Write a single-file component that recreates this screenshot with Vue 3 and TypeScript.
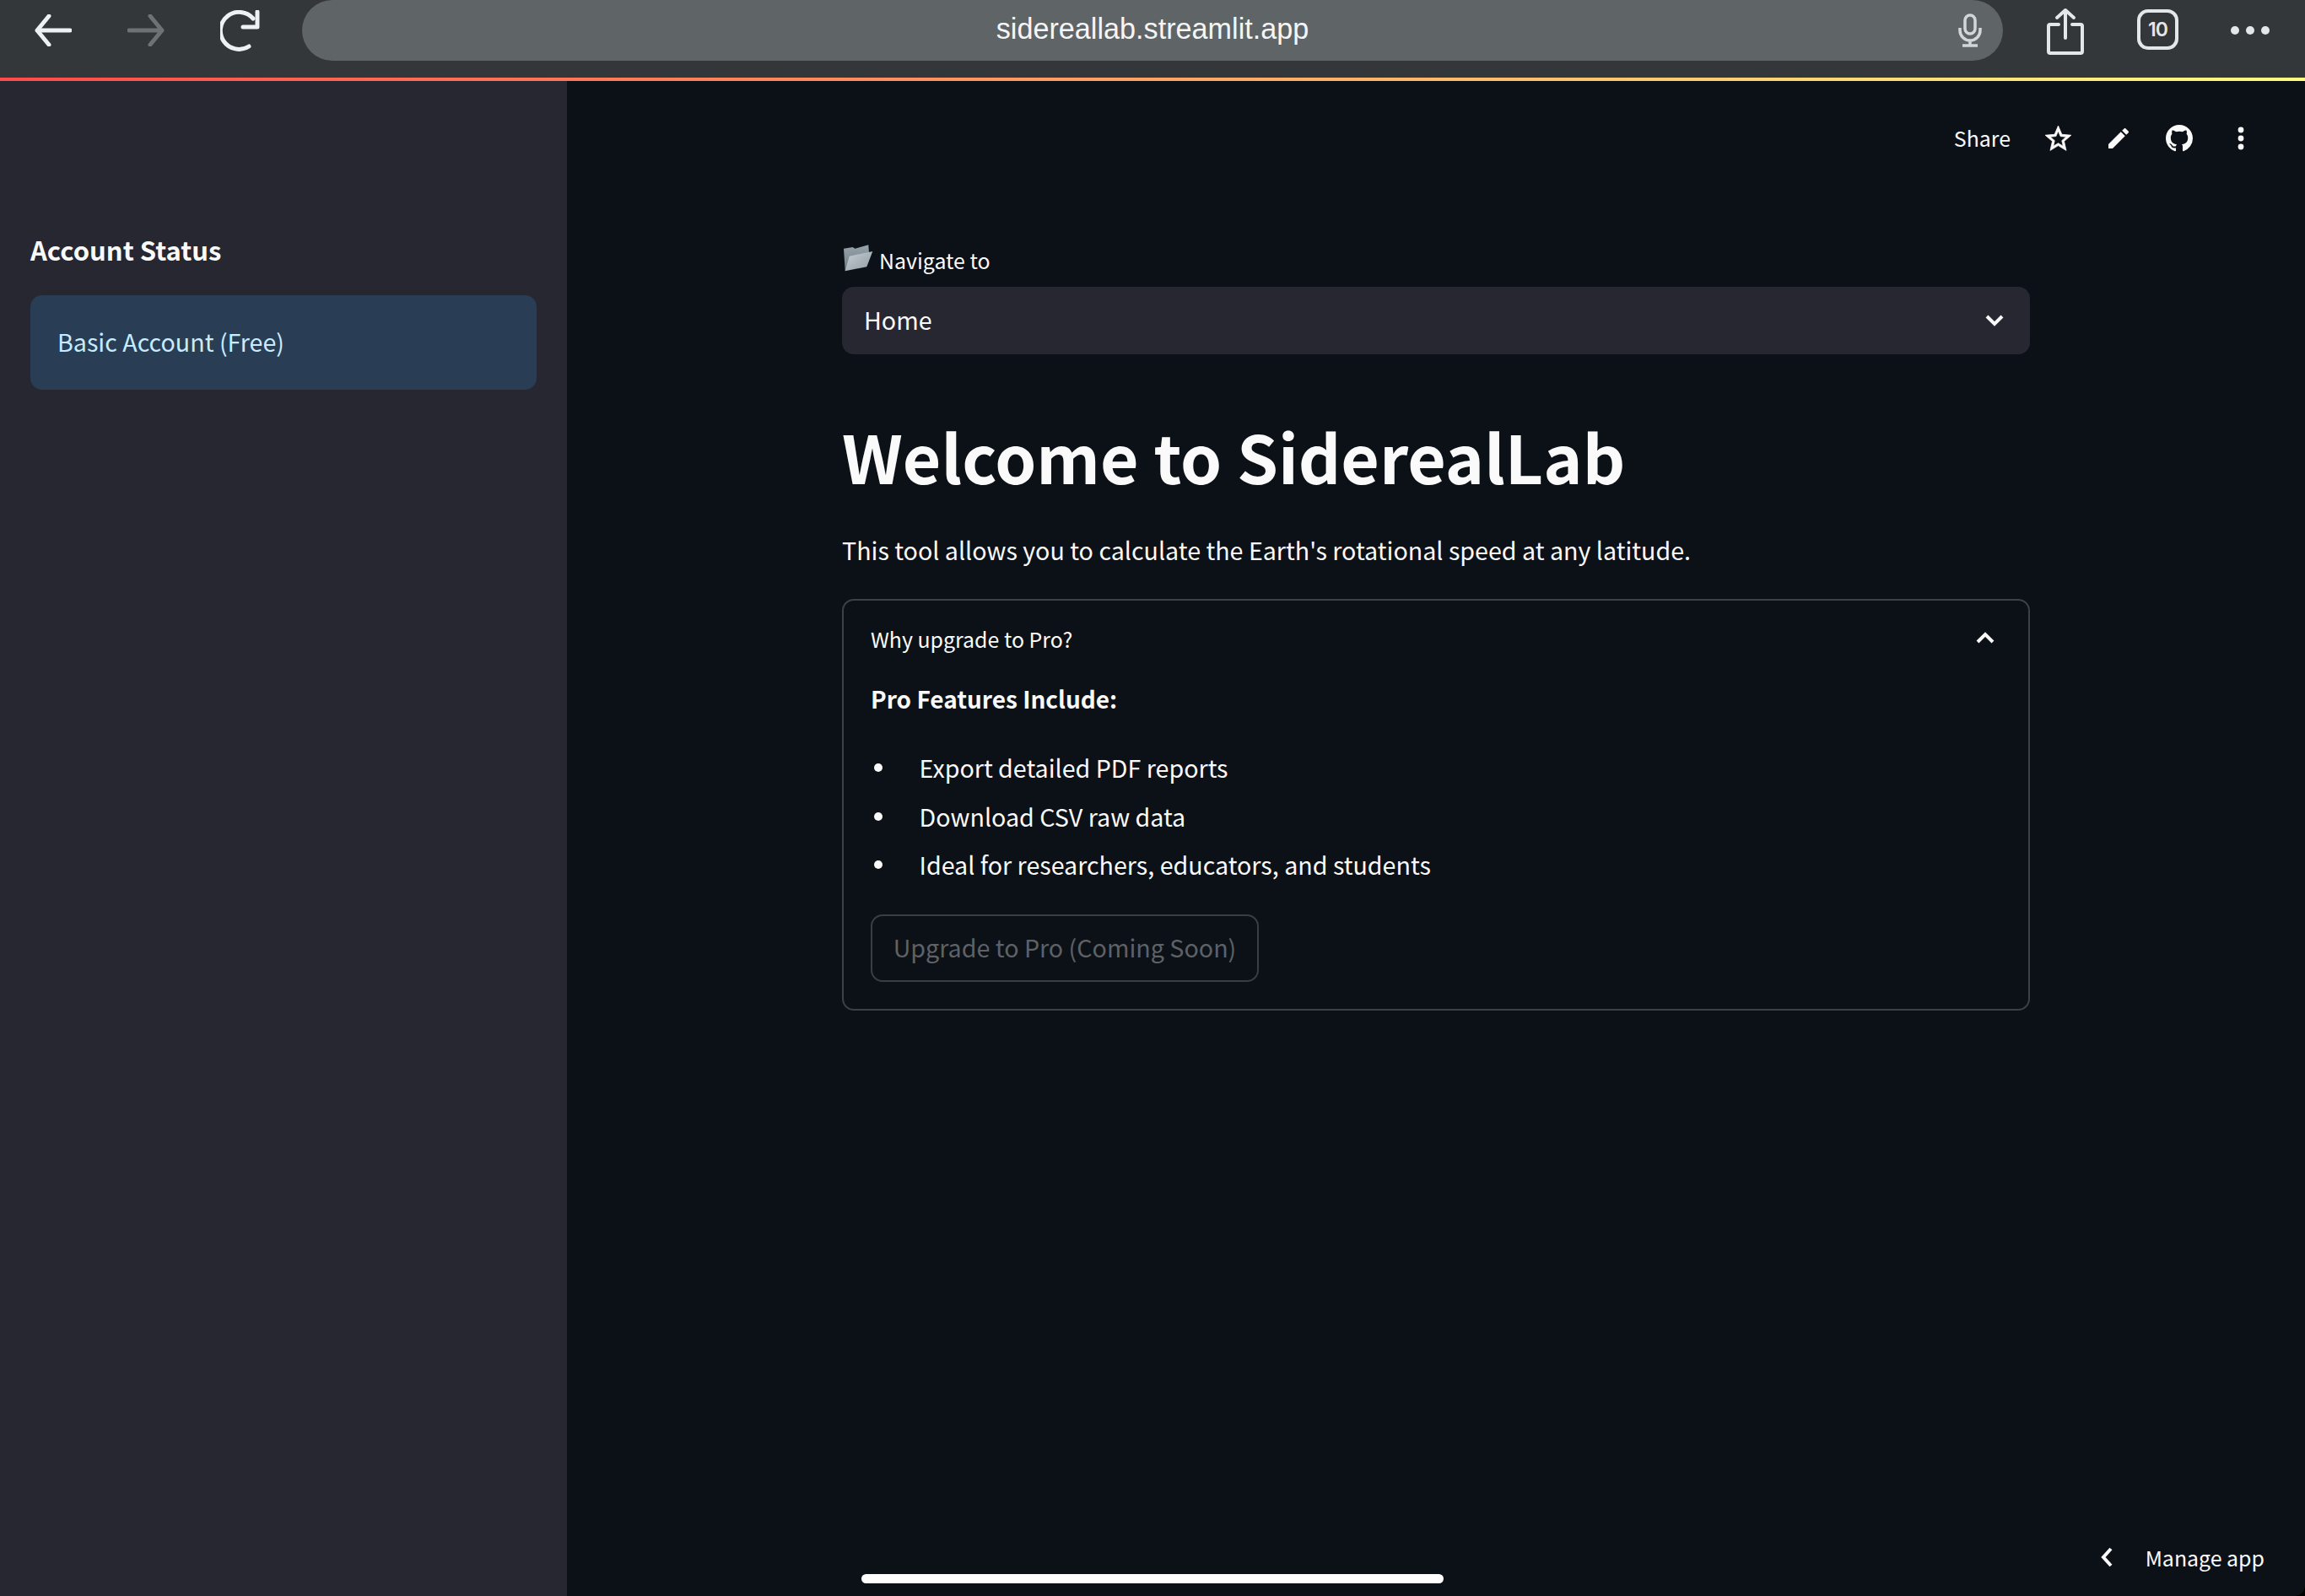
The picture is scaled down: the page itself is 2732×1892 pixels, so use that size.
<script setup lang="ts">
const features: string[] = [
  'Export detailed PDF reports',
  'Download CSV raw data',
  'Ideal for researchers, educators, and students',
]
</script>

<template>
  <div class="page">
    <header class="browser">
      <div class="nav">
        <svg class="nav-icon" width="44" height="38" viewBox="0 0 44 38"><path d="M42 19H3M17 2 3 19l14 17" /></svg>
        <svg class="nav-icon off" width="44" height="38" viewBox="0 0 44 38"><path d="M2 19h39M27 2l14 17-14 17" /></svg>
        <svg class="nav-icon reload" width="48" height="50" viewBox="0 0 48 50"><path d="M39 10A22 22 0 1 0 34 43" /><path d="M44 2v18H27" /></svg>
      </div>
      <div class="url">
        <span class="url-text">sidereallab.streamlit.app</span>
        <svg class="mic" width="28" height="40" viewBox="0 0 28 40"><rect x="8" y="2" width="12" height="22" rx="6" /><path d="M2 17v3a12 12 0 0 0 24 0v-3M14 32v6M5 38h18" /></svg>
      </div>
      <div class="tools">
        <svg class="tool-share" width="44" height="56" viewBox="0 0 44 56"><path d="M14 20H4a2 2 0 0 0-2 2v30a2 2 0 0 0 2 2h36a2 2 0 0 0 2-2V22a2 2 0 0 0-2-2H30M22 36V3M12 12 22 3l10 9" /></svg>
        <div class="tabs">10</div>
        <svg class="more" width="46" height="12" viewBox="0 0 46 12"><circle cx="5" cy="6" r="5" /><circle cx="23" cy="6" r="5" /><circle cx="41" cy="6" r="5" /></svg>
      </div>
    </header>
    <div class="deco"></div>

    <div class="app">
      <aside class="sidebar">
        <h2 class="side-title">Account Status</h2>
        <div class="alert">Basic Account (Free)</div>
      </aside>

      <main class="main">
        <div class="topbar">
          <span class="share">Share</span>
          <svg class="top-star" width="37" height="37" viewBox="0 0 24 24"><path d="M22 9.24l-7.19-.62L12 2 9.19 8.63 2 9.24l5.46 4.73L5.82 21 12 17.27 18.18 21l-1.63-7.03L22 9.24zM12 15.4l-3.76 2.27 1-4.28-3.32-2.88 4.38-.38L12 6.1l1.71 4.04 4.38.38-3.32 2.88 1 4.28L12 15.4z" /></svg>
          <svg class="top-edit" width="32" height="32" viewBox="0 0 24 24"><path d="M3 17.25V21h3.75L17.81 9.94l-3.75-3.75L3 17.25zM20.71 7.04c.39-.39.39-1.02 0-1.41l-2.34-2.34c-.39-.39-1.02-.39-1.41 0l-1.83 1.83 3.75 3.75 1.83-1.83z" /></svg>
          <svg class="top-gh" width="32" height="32" viewBox="0 0 16 16"><path d="M8 0C3.58 0 0 3.58 0 8c0 3.54 2.29 6.53 5.47 7.59.4.07.55-.17.55-.38 0-.19-.01-.82-.01-1.49-2.01.37-2.53-.49-2.69-.94-.09-.23-.48-.94-.82-1.13-.28-.15-.68-.52-.01-.53.63-.01 1.08.58 1.23.82.72 1.21 1.87.87 2.33.66.07-.52.28-.87.51-1.07-1.78-.2-3.64-.89-3.64-3.95 0-.87.31-1.59.82-2.15-.08-.2-.36-1.02.08-2.12 0 0 .67-.21 2.2.82.64-.18 1.32-.27 2-.27.68 0 1.36.09 2 .27 1.53-1.04 2.2-.82 2.2-.82.44 1.1.16 1.92.08 2.12.51.56.82 1.27.82 2.15 0 3.07-1.87 3.75-3.65 3.95.29.25.54.73.54 1.48 0 1.07-.01 1.93-.01 2.2 0 .21.15.46.55.38A8.013 8.013 0 0016 8c0-4.42-3.58-8-8-8z" /></svg>
          <svg class="top-dots" width="10" height="28" viewBox="0 0 10 28"><circle cx="5" cy="4" r="3.4" /><circle cx="5" cy="14" r="3.4" /><circle cx="5" cy="24" r="3.4" /></svg>
        </div>

        <div class="content">
          <label class="nav-label">
            <svg class="folder" width="36" height="34" viewBox="0 0 36 34">
              <defs>
                <linearGradient id="fback" x1="0" y1="0" x2="0" y2="1"><stop offset="0" stop-color="#98a4ab" /><stop offset="1" stop-color="#6d7a82" /></linearGradient>
                <linearGradient id="ffront" x1="0" y1="0" x2="1" y2="1"><stop offset="0" stop-color="#c6cfd4" /><stop offset="1" stop-color="#8f9ba3" /></linearGradient>
              </defs>
              <path d="M0 5.7 10.7 4l2.6 1.7 16-4.4.7 9.4L1.7 32.3z" fill="url(#fback)" />
              <path d="M6.7 14.7 34.3 9l-7 18.3-25.6 5z" fill="url(#ffront)" />
            </svg>
            <span>Navigate to</span>
          </label>
          <div class="select">
            <span class="lift">Home</span>
            <svg class="chev" width="22" height="14" viewBox="0 0 22 14"><path d="M2 2l9 9 9-9" /></svg>
          </div>

          <h1 class="title">Welcome to SiderealLab</h1>
          <p class="intro">This tool allows you to calculate the Earth's rotational speed at any latitude.</p>

          <section class="expander">
            <div class="exp-head">
              <span>Why upgrade to Pro?</span>
              <svg class="chev" width="22" height="14" viewBox="0 0 22 14"><path d="M2 12l9-9 9 9" /></svg>
            </div>
            <p class="pro">Pro Features Include:</p>
            <ul class="list">
              <li v-for="item in features" :key="item">{{ item }}</li>
            </ul>
            <button class="upgrade" disabled>Upgrade to Pro (Coming Soon)</button>
          </section>
        </div>
      </main>
    </div>

    <div class="manage">
      <svg class="chev" width="16" height="26" viewBox="0 0 16 26"><path d="M13 3 4 13l9 10" /></svg>
      <span>Manage app</span>
    </div>
    <div class="home-bar"></div>
    <div class="corner"></div>
  </div>
</template>

<style>
html, body { margin: 0; background: #0c1117; }
</style>

<style scoped>
.page {
  position: relative;
  width: 2732px;
  height: 1892px;
  overflow: hidden;
  display: flex;
  flex-direction: column;
  background: #0c1117;
  color: #fafafa;
  font-family: "Noto Sans CJK SC", "Noto Sans", sans-serif;
}
.browser {
  height: 92px;
  flex: none;
  display: flex;
  background: #33373a;
}
.nav { width: 358px; flex: none; display: flex; align-items: flex-start; }
.nav-icon { fill: none; stroke: #eef1f3; stroke-width: 5px; stroke-linecap: round; stroke-linejoin: round; margin-top: 17px; }
.nav-icon:first-child { margin-left: 41px; }
.nav-icon.off { stroke: #6f7275; margin-left: 66px; }
.nav-icon.reload { margin-left: 66px; margin-top: 12px; }
.url {
  width: 2016px;
  height: 72px;
  flex: none;
  position: relative;
  display: flex;
  align-items: center;
  justify-content: center;
  border-radius: 36px;
  background: #5f6467;
}
.url-text { font-family: "Liberation Sans", Arial, sans-serif; font-size: 34.2px; color: #f4f5f6; margin-bottom: 3px; }
.mic { position: absolute; right: 25px; top: 16px; fill: none; stroke: #d3d6d8; stroke-width: 3.5px; }
.tools { flex: 1; display: flex; align-items: flex-start; }
.tool-share { margin: 9px 0 0 52px; fill: none; stroke: #e4e7e9; stroke-width: 4px; stroke-linecap: round; stroke-linejoin: round; }
.tabs {
  margin: 11px 0 0 63px;
  width: 49px;
  height: 48px;
  box-sizing: border-box;
  border: 4.5px solid #e4e7e9;
  border-radius: 13px;
  display: flex;
  align-items: center;
  justify-content: center;
  font-family: Inter, sans-serif;
  font-size: 23px;
  font-weight: 600;
  letter-spacing: -1px;
  color: #e4e7e9;
}
.more { margin: 30px 0 0 62px; fill: #e4e7e9; }
.deco {
  height: 4px;
  flex: none;
  background: linear-gradient(90deg, #ff4b4b, #fffd80);
}
.app { flex: 1; min-height: 0; display: flex; }
.sidebar {
  width: 672px;
  flex: none;
  box-sizing: border-box;
  padding: 175px 36px 0;
  background: #262730;
}
.side-title { margin: 0 0 29px; font-size: 31px; line-height: 50px; font-weight: 600; }
.alert {
  height: 112px;
  box-sizing: border-box;
  display: flex;
  align-items: center;
  padding: 0 32px 4px;
  border-radius: 14px;
  background: #293e55;
  color: #c7ebff;
  font-size: 28.65px;
}
.main { flex: 1; min-width: 0; }
.topbar {
  height: 136px;
  box-sizing: border-box;
  padding-right: 71px;
  display: flex;
  align-items: center;
  justify-content: flex-end;
  fill: #fafafa;
  font-size: 24.9px;
}
.share { margin-right: 38px; margin-bottom: 2px; }
.top-star { margin-right: 37px; stroke: #fafafa; stroke-width: 0.5px; }
.top-edit { margin-right: 40px; }
.top-gh { margin-right: 52px; }
.content { padding: 0 326px; }
.nav-label { display: flex; align-items: center; height: 44px; margin-top: 52px; font-size: 24.9px; }
.nav-label span { margin-top: 3px; }
.folder { margin: 0 6px 0 2px; }
.select {
  margin-top: 12px;
  height: 80px;
  padding: 0 26px;
  display: flex;
  align-items: center;
  justify-content: space-between;
  border-radius: 14px;
  background: #262730;
  font-size: 28.65px;
}
.select .chev { margin-right: 5px; }
.lift { margin-bottom: 3px; }
.chev { fill: none; stroke: #fafafa; stroke-width: 4px; }
.title { margin: 68px 0 0; font-size: 78.5px; line-height: 105px; font-weight: 700; }
.intro { margin: 37px 0 0; font-size: 28.65px; line-height: 44px; }
.expander {
  margin-top: 36px;
  height: 488px;
  box-sizing: border-box;
  padding: 0 32px;
  border: 2px solid #3d4046;
  border-radius: 14px;
}
.exp-head {
  display: flex;
  align-items: center;
  justify-content: space-between;
  box-sizing: border-box;
  height: 94px;
  padding: 0 8px 5px 0;
  font-size: 24.9px;
}
.exp-head .chev { margin-bottom: 2px; }
.pro { margin: 0; font-size: 28px; line-height: 44px; font-weight: 600; }
.list { margin: 38px 0 0; padding: 0; list-style: none; font-size: 28.65px; line-height: 44px; }
.list li { display: flex; align-items: center; margin-bottom: 13.5px; padding-left: 4px; }
.list li::before {
  content: "";
  width: 10px;
  height: 10px;
  margin-right: 43.5px;
  border-radius: 50%;
  background: #fafafa;
}
.upgrade {
  display: block;
  margin-top: 37px;
  width: 460px;
  height: 80px;
  box-sizing: border-box;
  padding: 0 0 4px;
  border: 2px solid #3a3d44;
  border-radius: 14px;
  background: transparent;
  color: #5e6166;
  font: 28.65px "Noto Sans CJK SC", "Noto Sans", sans-serif;
}
.manage {
  position: absolute;
  right: 48px;
  top: 1824px;
  display: flex;
  align-items: center;
  gap: 38px;
  font-size: 24.9px;
  line-height: 44px;
}
.home-bar {
  position: absolute;
  left: 1021px;
  top: 1866px;
  width: 690px;
  height: 11px;
  border-radius: 6px;
  background: #fff;
}
.corner {
  position: absolute;
  right: 0;
  bottom: 0;
  width: 12px;
  height: 12px;
  background: radial-gradient(circle at 0 0, transparent 11.5px, #000 12px);
}
</style>
